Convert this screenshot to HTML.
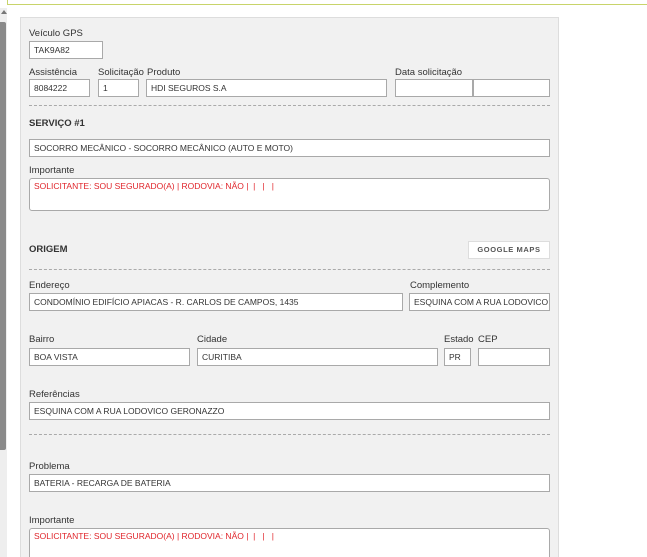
<!DOCTYPE html>
<html style="width:647px;height:557px;overflow:hidden"><head><meta charset="utf-8"><style>
body{margin:0;width:647px;height:557px;overflow:hidden;background:#fff;position:relative;font-family:"Liberation Sans",sans-serif;}
.a{position:absolute}
.top{left:7px;top:4px;width:640px;height:1px;background:#c8d46a}
.vl{left:7px;top:0;width:1px;height:5px;background:#c8d46a}
.track{left:0;top:8px;width:7px;height:549px;background:#eee}
.thumb{left:0;top:22px;width:6px;height:428px;background:#8a8a8a;border-radius:0 2px 2px 0}
.panel{left:20px;top:17px;width:537px;height:545px;background:#f1f1f1;border:1px solid #ddd}
.l{position:absolute;font-size:9.5px;color:#333;line-height:11px;white-space:nowrap;margin-top:1px}
.i{position:absolute;background:#fff;border:1px solid #a9a9a9;box-sizing:border-box;font-size:8.5px;color:#333;padding:0 4px;line-height:16px;white-space:nowrap;overflow:hidden}
.t{border-radius:3px;color:#e0252b;line-height:14px}
.d{position:absolute;left:29px;width:521px;border-top:1px dashed #aaa}
.h{position:absolute;font-size:9.5px;font-weight:bold;color:#333;margin-top:1px}
.btn{left:468px;top:241px;width:82px;height:18px;background:#fff;border:1px solid #ddd;box-sizing:border-box;font-size:7.5px;font-weight:bold;letter-spacing:.6px;color:#555;text-align:center;line-height:16px}
</style></head><body>
<div class="a top"></div><div class="a vl"></div>
<div class="a track"></div><div class="a thumb"></div>
<div class="a" style="left:1px;top:10px;width:0;height:0;border-left:3px solid transparent;border-right:3px solid transparent;border-bottom:4px solid #777"></div>
<div class="a panel"></div>

<div class="l" style="left:29px;top:27px">Veículo GPS</div>
<div class="i" style="left:29px;top:41px;width:74px;height:18px">TAK9A82</div>
<div class="l" style="left:29px;top:66px">Assistência</div>
<div class="l" style="left:98px;top:66px">Solicitação</div>
<div class="l" style="left:147px;top:66px">Produto</div>
<div class="l" style="left:395px;top:66px">Data solicitação</div>
<div class="i" style="left:29px;top:79px;width:61px;height:18px">8084222</div>
<div class="i" style="left:98px;top:79px;width:41px;height:18px">1</div>
<div class="i" style="left:146px;top:79px;width:241px;height:18px">HDI SEGUROS S.A</div>
<div class="i" style="left:395px;top:79px;width:78px;height:18px"></div>
<div class="i" style="left:473px;top:79px;width:77px;height:18px"></div>
<div class="d" style="top:105px"></div>
<div class="h" style="left:29px;top:117px">SERVIÇO #1</div>
<div class="i" style="left:29px;top:139px;width:521px;height:18px">SOCORRO MECÂNICO - SOCORRO MECÂNICO (AUTO E MOTO)</div>
<div class="l" style="left:29px;top:164px">Importante</div>
<div class="i t" style="left:29px;top:178px;width:521px;height:33px">SOLICITANTE: SOU SEGURADO(A) | RODOVIA: NÃO | &nbsp;| &nbsp;&nbsp;| &nbsp;&nbsp;|</div>
<div class="h" style="left:29px;top:243px">ORIGEM</div>
<div class="a btn">GOOGLE MAPS</div>
<div class="d" style="top:269px"></div>
<div class="l" style="left:29px;top:279px">Endereço</div>
<div class="l" style="left:410px;top:279px">Complemento</div>
<div class="i" style="left:29px;top:293px;width:374px;height:18px">CONDOMÍNIO EDIFÍCIO APIACAS - R. CARLOS DE CAMPOS, 1435</div>
<div class="i" style="left:409px;top:293px;width:141px;height:18px">ESQUINA COM A RUA LODOVICO GERONAZZO</div>
<div class="l" style="left:29px;top:333px">Bairro</div>
<div class="l" style="left:197px;top:333px">Cidade</div>
<div class="l" style="left:444px;top:333px">Estado</div>
<div class="l" style="left:478px;top:333px">CEP</div>
<div class="i" style="left:29px;top:348px;width:161px;height:18px">BOA VISTA</div>
<div class="i" style="left:197px;top:348px;width:241px;height:18px">CURITIBA</div>
<div class="i" style="left:444px;top:348px;width:27px;height:18px">PR</div>
<div class="i" style="left:478px;top:348px;width:72px;height:18px"></div>
<div class="l" style="left:29px;top:388px">Referências</div>
<div class="i" style="left:29px;top:402px;width:521px;height:18px">ESQUINA COM A RUA LODOVICO GERONAZZO</div>
<div class="d" style="top:434px"></div>
<div class="l" style="left:29px;top:460px">Problema</div>
<div class="i" style="left:29px;top:474px;width:521px;height:18px">BATERIA - RECARGA DE BATERIA</div>
<div class="l" style="left:29px;top:514px">Importante</div>
<div class="i t" style="left:29px;top:528px;width:521px;height:33px">SOLICITANTE: SOU SEGURADO(A) | RODOVIA: NÃO | &nbsp;| &nbsp;&nbsp;| &nbsp;&nbsp;|</div>
</body></html>
